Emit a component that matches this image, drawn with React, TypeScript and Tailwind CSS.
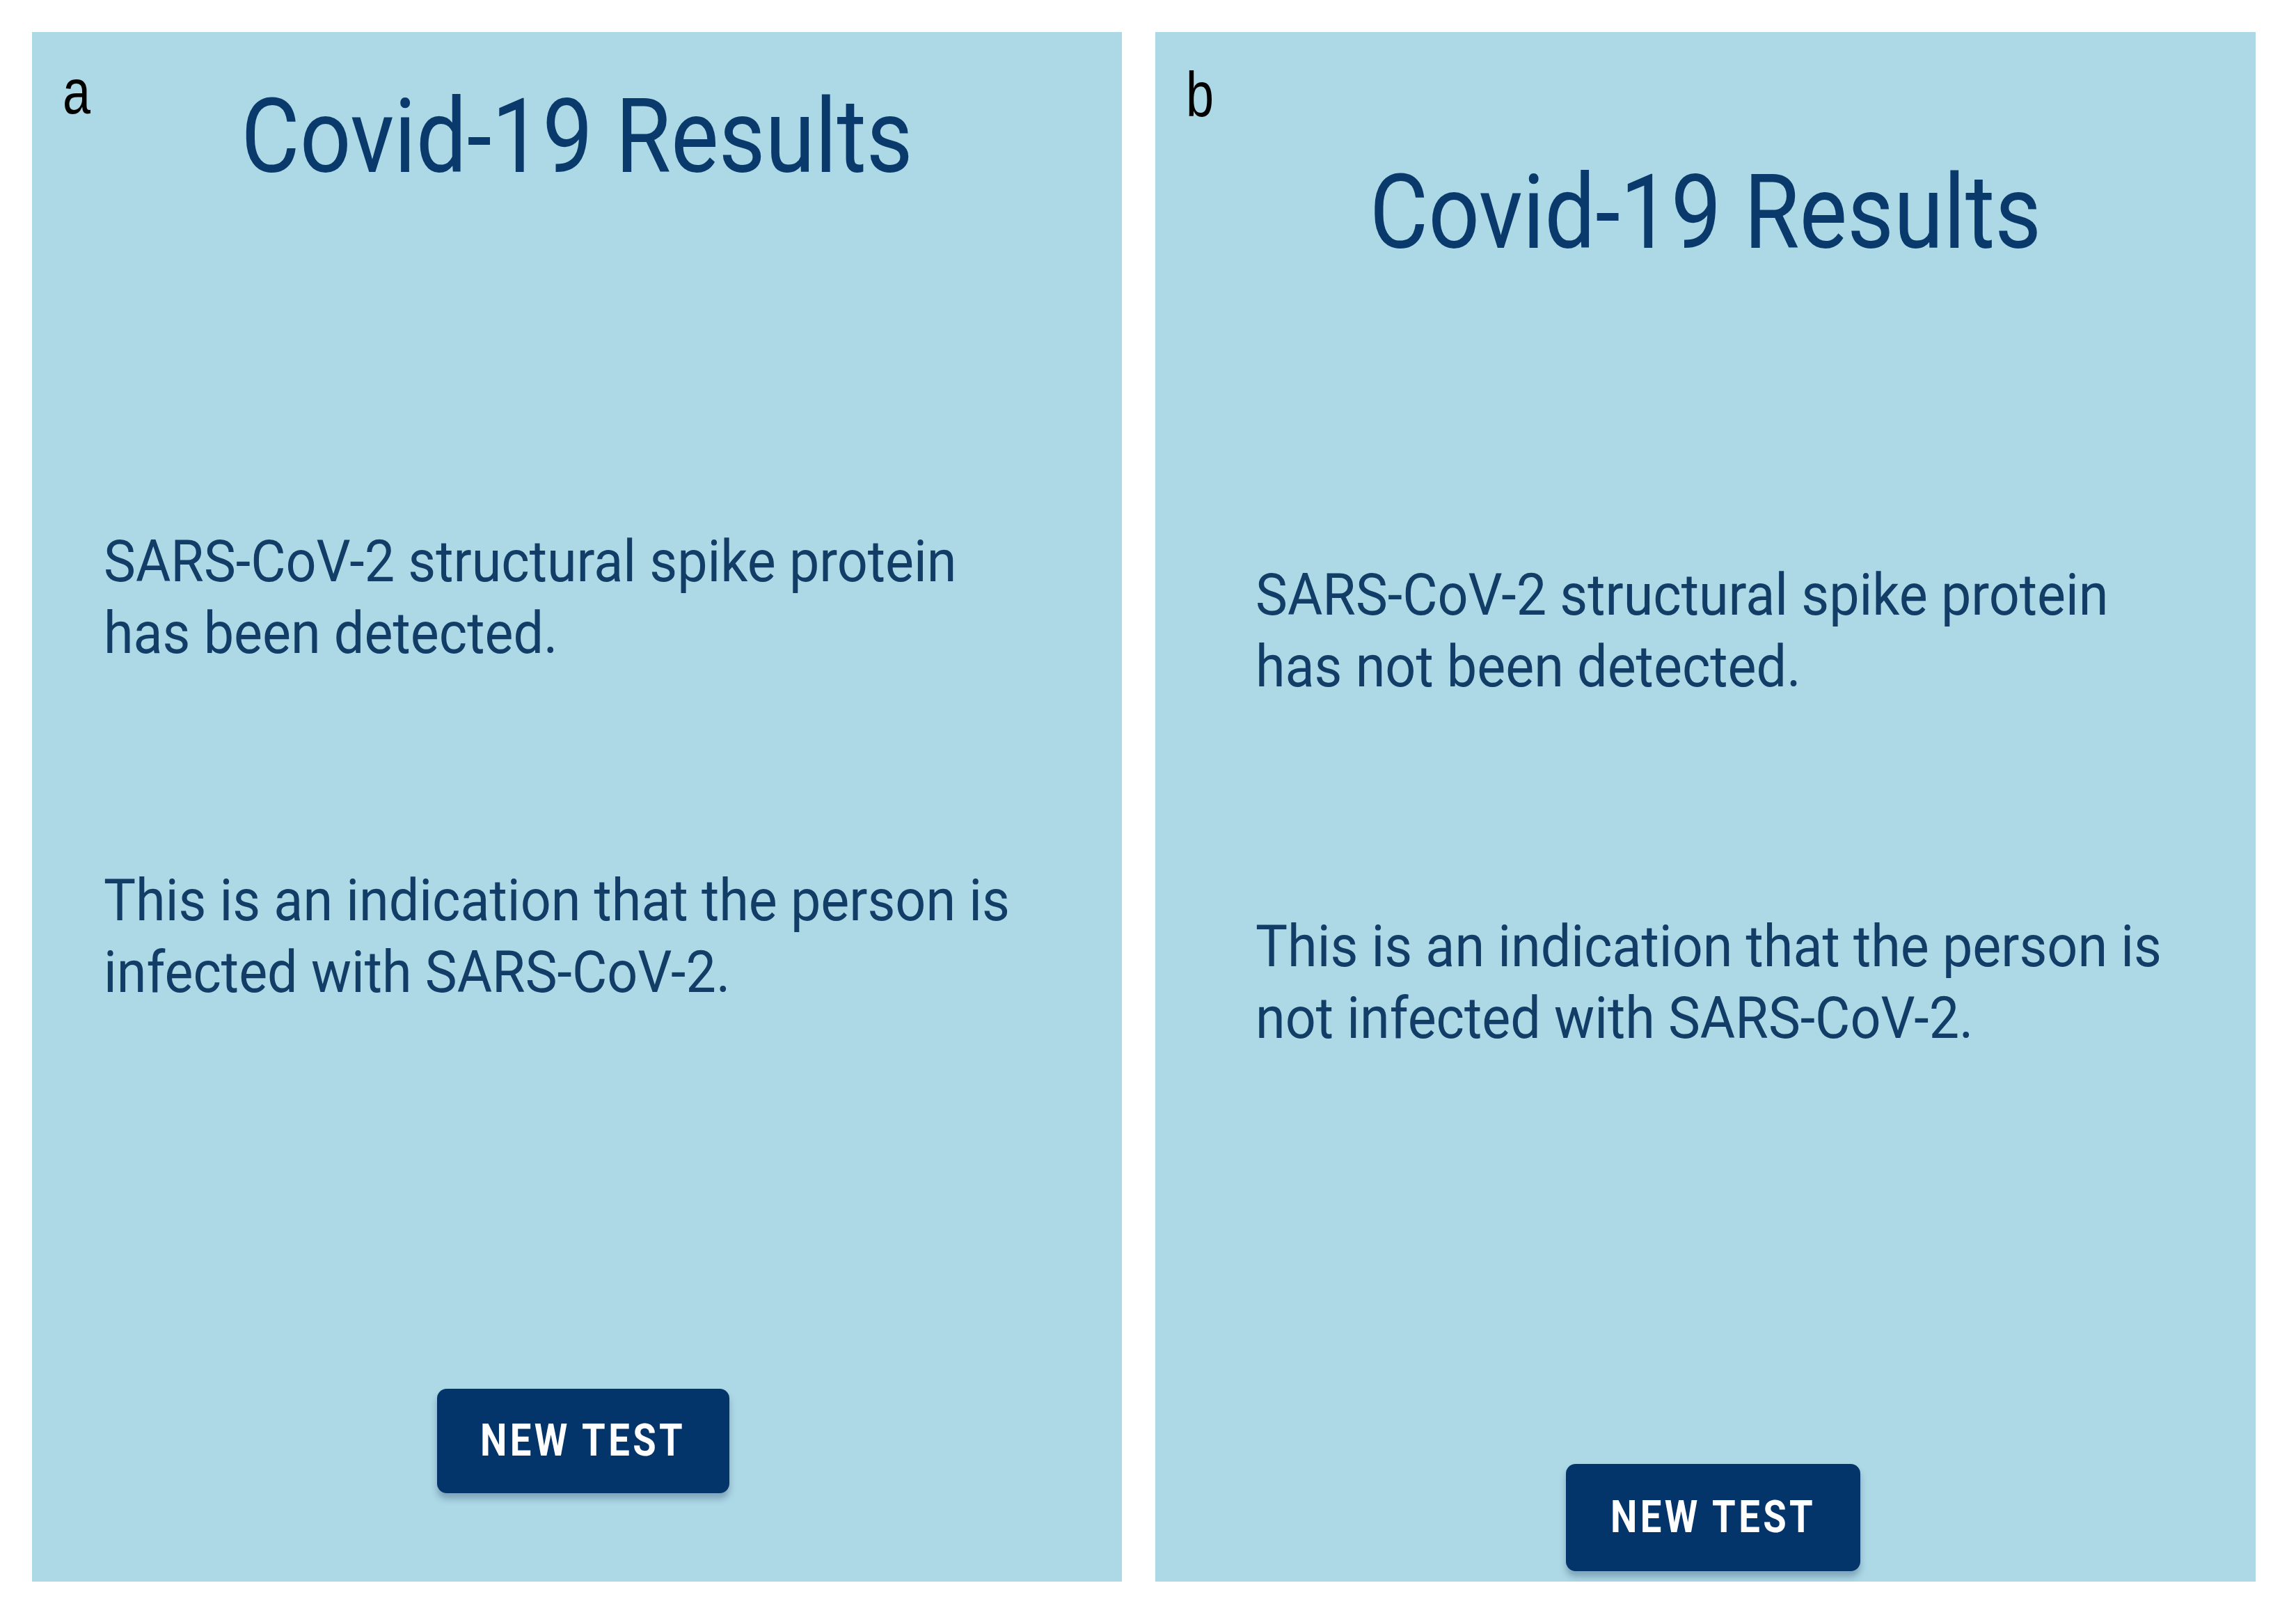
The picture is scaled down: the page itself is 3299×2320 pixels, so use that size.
import React from "react";

function Panel({
  label,
  widthClass,
  labelPos,
  titleMt,
  p1Mt,
  p2Mt,
  btnMt,
  padX,
  line1,
  line2,
  btnClass,
}: {
  label: string;
  widthClass: string;
  labelPos: string;
  titleMt: string;
  p1Mt: string;
  p2Mt: string;
  btnMt: string;
  padX: string;
  line1: React.ReactNode;
  line2: React.ReactNode;
  btnClass: string;
}) {
  return (
    <div className={`relative flex h-[2226px] flex-col bg-[#add8e6] font-[Roboto,'Noto_Sans',sans-serif] ${widthClass}`}>
      <span
        className={`absolute origin-left scale-x-[0.8] font-['Liberation_Sans',Arial,sans-serif] text-[90px] leading-none text-black ${labelPos}`}
      >
        {label}
      </span>
      <h1
        className={`scale-x-[0.875] text-center text-[148px] font-normal leading-none text-[#0a3a6c] ${titleMt}`}
      >
        Covid-19 Results
      </h1>
      <p className={`${padX} ${p1Mt} text-[84px] leading-[103px] text-[#123d66]`}>
        <span className="inline-block origin-left scale-x-[0.92]">{line1}</span>
      </p>
      <p className={`${padX} ${p2Mt} text-[84px] leading-[103px] text-[#123d66]`}>
        <span className="inline-block origin-left scale-x-[0.92]">{line2}</span>
      </p>
      <div className={`flex justify-center ${btnMt}`}>
        <button
          className={`flex items-center justify-center rounded-[14px] bg-[#03346a] text-[64px] font-bold tracking-[0.08em] text-white shadow-[0_8px_10px_rgba(40,70,100,0.35)] ${btnClass}`}
        >
          <span className="inline-block scale-x-[0.85]">NEW TEST</span>
        </button>
      </div>
    </div>
  );
}

export default function App() {
  return (
    <div className="flex h-[2320px] w-[3299px] gap-[48px] bg-white pl-[46px] pt-[46px]">
      <Panel
        label="a"
        widthClass="w-[1566px]"
        labelPos="left-[44px] top-[41px]"
        titleMt="mt-[77px]"
        p1Mt="mt-[484px]"
        p2Mt="mt-[281px]"
        btnMt="mt-[547px]"
        padX="pl-[103px]"
        line1={
          <>
            SARS-CoV-2 structural spike protein
            <br />
            has been detected.
          </>
        }
        line2={
          <>
            This is an indication that the person is
            <br />
            infected with SARS-CoV-2.
          </>
        }
        btnClass="h-[150px] w-[420px] ml-[18px]"
      />
      <Panel
        label="b"
        widthClass="w-[1581px]"
        labelPos="left-[44px] top-[45px]"
        titleMt="mt-[186px]"
        p1Mt="mt-[423px]"
        p2Mt="mt-[299px]"
        btnMt="mt-[589px]"
        padX="pl-[144px]"
        line1={
          <>
            SARS-CoV-2 structural spike protein
            <br />
            has not been detected.
          </>
        }
        line2={
          <>
            This is an indication that the person is
            <br />
            not infected with SARS-CoV-2.
          </>
        }
        btnClass="h-[154px] w-[423px] ml-[22px]"
      />
    </div>
  );
}
